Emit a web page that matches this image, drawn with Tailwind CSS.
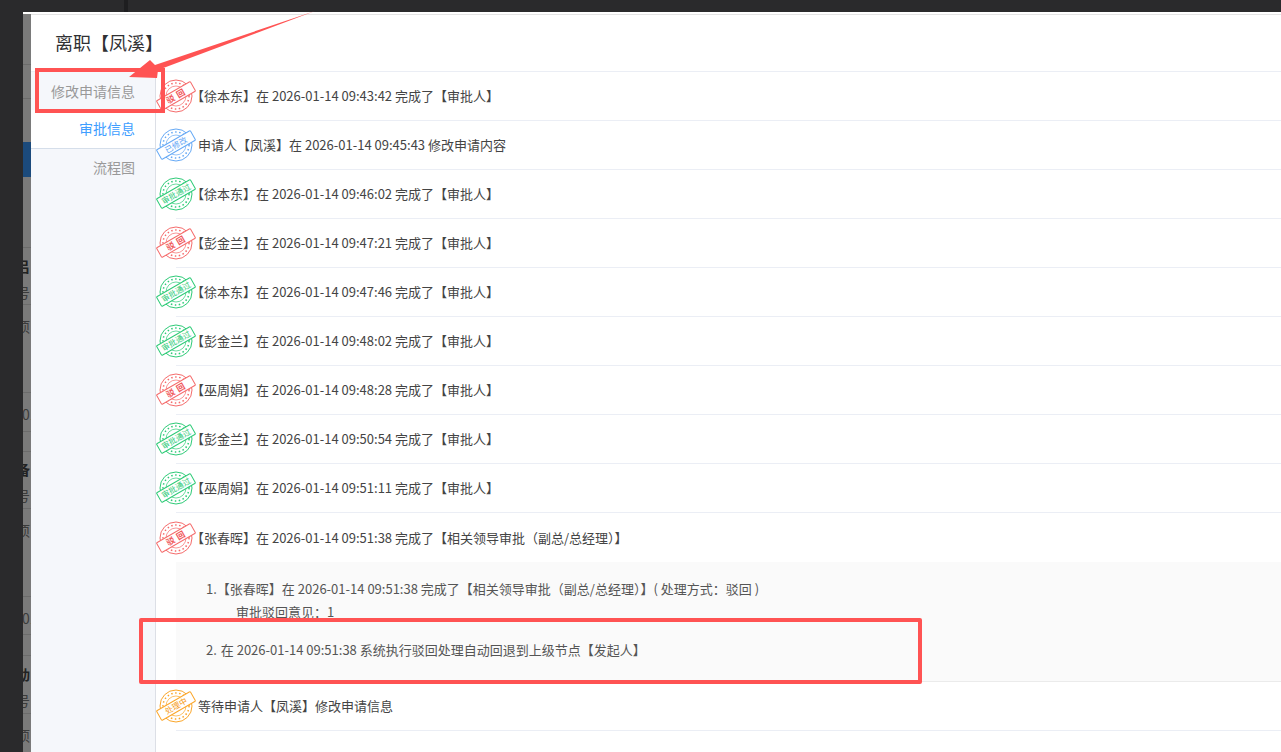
<!DOCTYPE html>
<html lang="zh-CN">
<head>
  <meta charset="UTF-8">
  <title>离职【凤溪】</title>
  <script src="https://cdn.jsdelivr.net/npm/@tailwindcss/browser@4"></script>
</head>
<body class="relative h-[752px] w-[1281px] overflow-hidden bg-[#2a2a2c] font-['Noto_Sans_CJK_SC','Open_Sans',sans-serif] text-[13px] text-[#444]">

<!-- stamps -->
<svg class="hidden">
  <symbol id="stamp-red" viewBox="0 0 40 40">
    <g fill="none" stroke="#f56c6c">
      <circle cx="20" cy="20" r="16" stroke-width="1"/>
      <circle cx="20" cy="20" r="13" stroke-width="1.5" stroke-dasharray="1.5 2.5"/>
      <circle cx="20" cy="20" r="10" stroke-width="0.7"/>
    </g>
    <g transform="rotate(-30 20 20)">
      <rect x="0.5" y="14.5" width="39" height="11" rx="1" fill="#fff" stroke="#f56c6c"/>
      <text x="21" y="23.2" text-anchor="middle" font-size="8.5" font-weight="700" letter-spacing="3" fill="#f0565a">驳回</text>
    </g>
  </symbol>
  <symbol id="stamp-blue" viewBox="0 0 40 40">
    <g fill="none" stroke="#66a9f5">
      <circle cx="20" cy="20" r="16" stroke-width="1"/>
      <circle cx="20" cy="20" r="13" stroke-width="1.5" stroke-dasharray="1.5 2.5"/>
      <circle cx="20" cy="20" r="10" stroke-width="0.7"/>
    </g>
    <g transform="rotate(-30 20 20)">
      <rect x="0.5" y="14.5" width="39" height="11" rx="1" fill="#fff" stroke="#66a9f5"/>
      <text x="20" y="23" text-anchor="middle" font-size="8" fill="#5aa2f5">已修改</text>
    </g>
  </symbol>
  <symbol id="stamp-green" viewBox="0 0 40 40">
    <g fill="none" stroke="#2fcb78">
      <circle cx="20" cy="20" r="16" stroke-width="1"/>
      <circle cx="20" cy="20" r="13" stroke-width="1.5" stroke-dasharray="1.5 2.5"/>
      <circle cx="20" cy="20" r="10" stroke-width="0.7"/>
    </g>
    <g transform="rotate(-30 20 20)">
      <rect x="0.5" y="14.5" width="39" height="11" rx="1" fill="#fff" stroke="#2fcb78"/>
      <text x="20" y="23" text-anchor="middle" font-size="8" fill="#2fcb78">审批通过</text>
    </g>
  </symbol>
  <symbol id="stamp-orange" viewBox="0 0 40 40">
    <g fill="none" stroke="#fba62a">
      <circle cx="20" cy="20" r="16" stroke-width="1"/>
      <circle cx="20" cy="20" r="13" stroke-width="1.5" stroke-dasharray="1.5 2.5"/>
      <circle cx="20" cy="20" r="10" stroke-width="0.7"/>
    </g>
    <g transform="rotate(-30 20 20)">
      <rect x="0.5" y="14.5" width="39" height="11" rx="1" fill="#fff" stroke="#fba62a"/>
      <text x="20" y="23" text-anchor="middle" font-size="8" fill="#f59a16">处理中</text>
    </g>
  </symbol>
</svg>

<div class="absolute top-0 left-[124px] h-[12px] w-[4px] bg-[#1e1e20]"></div>

<div class="flex h-[752px] pt-[12px] pl-[23px]">
  <!-- page behind the dialog -->
  <div class="flex h-[740px] w-[8px] shrink-0 flex-col overflow-hidden border-t-2 border-white bg-[#7a7a7a] text-[14px] leading-none text-[#222]">
    <div class="h-[51px] shrink-0 border-b border-[#6b6b6b]"></div>
    <div class="h-[34px] shrink-0 border-b border-[#6b6b6b]"></div>
    <div class="h-[43px] shrink-0"></div>
    <div class="h-[35px] shrink-0 bg-[#1b4a7c]"></div>
    <div class="h-[71px] shrink-0 border-b border-[#6b6b6b]"></div>
    <div class="h-[57px] shrink-0 border-b border-[#6b6b6b] pt-[11px] pl-0"><p class="-ml-[7px] font-bold">吕</p><p class="mt-[12px] -ml-[7px] text-[#3a3a3a]">号</p></div>
    <div class="h-[88px] shrink-0 border-b border-[#6b6b6b] pt-[14px]"><p class="-ml-[7px] text-[#3a3a3a]">项</p></div>
    <div class="h-[39px] shrink-0 border-b border-[#6b6b6b] pt-[14px]"><p class="-ml-[1px] text-[#3a3a3a]">01</p></div>
    <div class="h-[20px] shrink-0 border-b border-[#6b6b6b]"></div>
    <div class="h-[57px] shrink-0 border-b border-[#6b6b6b] pt-[10px]"><p class="-ml-[7px] font-bold">备</p><p class="mt-[12px] -ml-[7px] text-[#3a3a3a]">号</p></div>
    <div class="h-[88px] shrink-0 border-b border-[#6b6b6b] pt-[14px]"><p class="-ml-[7px] text-[#3a3a3a]">项</p></div>
    <div class="h-[38px] shrink-0 border-b border-[#6b6b6b] pt-[14px]"><p class="-ml-[1px] text-[#3a3a3a]">01</p></div>
    <div class="h-[21px] shrink-0 border-b border-[#6b6b6b]"></div>
    <div class="h-[58px] shrink-0 border-b border-[#6b6b6b] pt-[11px]"><p class="-ml-[7px] font-bold">动</p><p class="mt-[12px] -ml-[7px] text-[#3a3a3a]">号</p></div>
    <div class="h-[38px] shrink-0 pt-[14px]"><p class="-ml-[7px] text-[#3a3a3a]">项</p></div>
  </div>

  <!-- dialog -->
  <div class="min-w-0 flex-1 border-t-2 border-white bg-white">
    <div class="flex h-[57px] items-center border-t border-[#e4e4e4] pb-[2px] pl-[24px] text-[18px] text-[#303133]">离职【凤溪】</div>
    <div class="flex border-t border-[#ebeef5]">
      <!-- tabs -->
      <div class="h-[681px] w-[125px] shrink-0 border-r border-[#dcdfe6] bg-[#f5f7fb] text-right text-[14px] text-[#999]">
        <div class="h-[38px] pr-[20px] leading-[38px]">修改申请信息</div>
        <div class="h-[39px] border-b border-[#d5deea] bg-white pr-[20px] leading-[36px] text-[#409eff]">审批信息</div>
        <div class="h-[38px] pr-[20px] leading-[36px]">流程图</div>
      </div>
      <!-- timeline -->
      <div class="min-w-0 flex-1">
        <div class="ml-[20px] flex h-[49px] items-center border-b border-[#ebeef5]">
          <svg class="-ml-[20px] h-10 w-10 shrink-0"><use href="#stamp-red"/></svg>
          <span class="-ml-[5px]">【徐本东】在 2026-01-14 09:43:42 完成了【审批人】</span>
        </div>
        <div class="ml-[20px] flex h-[49px] items-center border-b border-[#ebeef5]">
          <svg class="-ml-[20px] h-10 w-10 shrink-0"><use href="#stamp-blue"/></svg>
          <span class="ml-[2px]">申请人【凤溪】在 2026-01-14 09:45:43 修改申请内容</span>
        </div>
        <div class="ml-[20px] flex h-[49px] items-center border-b border-[#ebeef5]">
          <svg class="-ml-[20px] h-10 w-10 shrink-0"><use href="#stamp-green"/></svg>
          <span class="-ml-[5px]">【徐本东】在 2026-01-14 09:46:02 完成了【审批人】</span>
        </div>
        <div class="ml-[20px] flex h-[49px] items-center border-b border-[#ebeef5]">
          <svg class="-ml-[20px] h-10 w-10 shrink-0"><use href="#stamp-red"/></svg>
          <span class="-ml-[5px]">【彭金兰】在 2026-01-14 09:47:21 完成了【审批人】</span>
        </div>
        <div class="ml-[20px] flex h-[49px] items-center border-b border-[#ebeef5]">
          <svg class="-ml-[20px] h-10 w-10 shrink-0"><use href="#stamp-green"/></svg>
          <span class="-ml-[5px]">【徐本东】在 2026-01-14 09:47:46 完成了【审批人】</span>
        </div>
        <div class="ml-[20px] flex h-[49px] items-center border-b border-[#ebeef5]">
          <svg class="-ml-[20px] h-10 w-10 shrink-0"><use href="#stamp-green"/></svg>
          <span class="-ml-[5px]">【彭金兰】在 2026-01-14 09:48:02 完成了【审批人】</span>
        </div>
        <div class="ml-[20px] flex h-[49px] items-center border-b border-[#ebeef5]">
          <svg class="-ml-[20px] h-10 w-10 shrink-0"><use href="#stamp-red"/></svg>
          <span class="-ml-[5px]">【巫周娟】在 2026-01-14 09:48:28 完成了【审批人】</span>
        </div>
        <div class="ml-[20px] flex h-[49px] items-center border-b border-[#ebeef5]">
          <svg class="-ml-[20px] h-10 w-10 shrink-0"><use href="#stamp-green"/></svg>
          <span class="-ml-[5px]">【彭金兰】在 2026-01-14 09:50:54 完成了【审批人】</span>
        </div>
        <div class="ml-[20px] flex h-[49px] items-center border-b border-[#ebeef5]">
          <svg class="-ml-[20px] h-10 w-10 shrink-0"><use href="#stamp-green"/></svg>
          <span class="-ml-[5px]">【巫周娟】在 2026-01-14 09:51:11 完成了【审批人】</span>
        </div>
        <div class="ml-[20px] flex h-[49px] items-center">
          <svg class="-ml-[20px] h-10 w-10 shrink-0"><use href="#stamp-red"/></svg>
          <span class="-ml-[5px]">【张春晖】在 2026-01-14 09:51:38 完成了【相关领导审批（副总/总经理）】</span>
        </div>
        <!-- detail -->
        <div class="ml-[20px] h-[120px] border-b border-[#ebebeb] bg-[#fafafa] pt-[17px] pl-[30px] text-[13px] leading-[20px] text-[#555]">
          <p>1.【张春晖】在 2026-01-14 09:51:38 完成了【相关领导审批（副总/总经理）】( 处理方式：驳回 )</p>
          <p class="mt-[3px] pl-[30px]">审批驳回意见：1</p>
          <p class="mt-[18px]"><span class="mr-[1px]">2.</span> 在 2026-01-14 09:51:38 系统执行驳回处理自动回退到上级节点【发起人】</p>
        </div>
        <div class="ml-[20px] flex h-[49px] items-center border-b border-[#ebeef5]">
          <svg class="-ml-[20px] h-10 w-10 shrink-0"><use href="#stamp-orange"/></svg>
          <span class="ml-[2px]">等待申请人【凤溪】修改申请信息</span>
        </div>
      </div>
    </div>
  </div>
</div>

<!-- annotations drawn over the screenshot -->
<div class="absolute top-[68px] left-[35px] h-[45px] w-[130px] border-[4px] border-[#ff5353]"></div>
<div class="absolute top-[618px] left-[139px] h-[66px] w-[783px] rounded-[2px] border-[4px] border-[#ff5353]"></div>
<svg class="absolute top-0 left-0 h-[100px] w-[340px]" viewBox="0 0 340 100">
  <polygon points="315,11 155,65 150,60 129,77 157,78 158,70" fill="#ff5353"/>
</svg>
</body>
</html>
